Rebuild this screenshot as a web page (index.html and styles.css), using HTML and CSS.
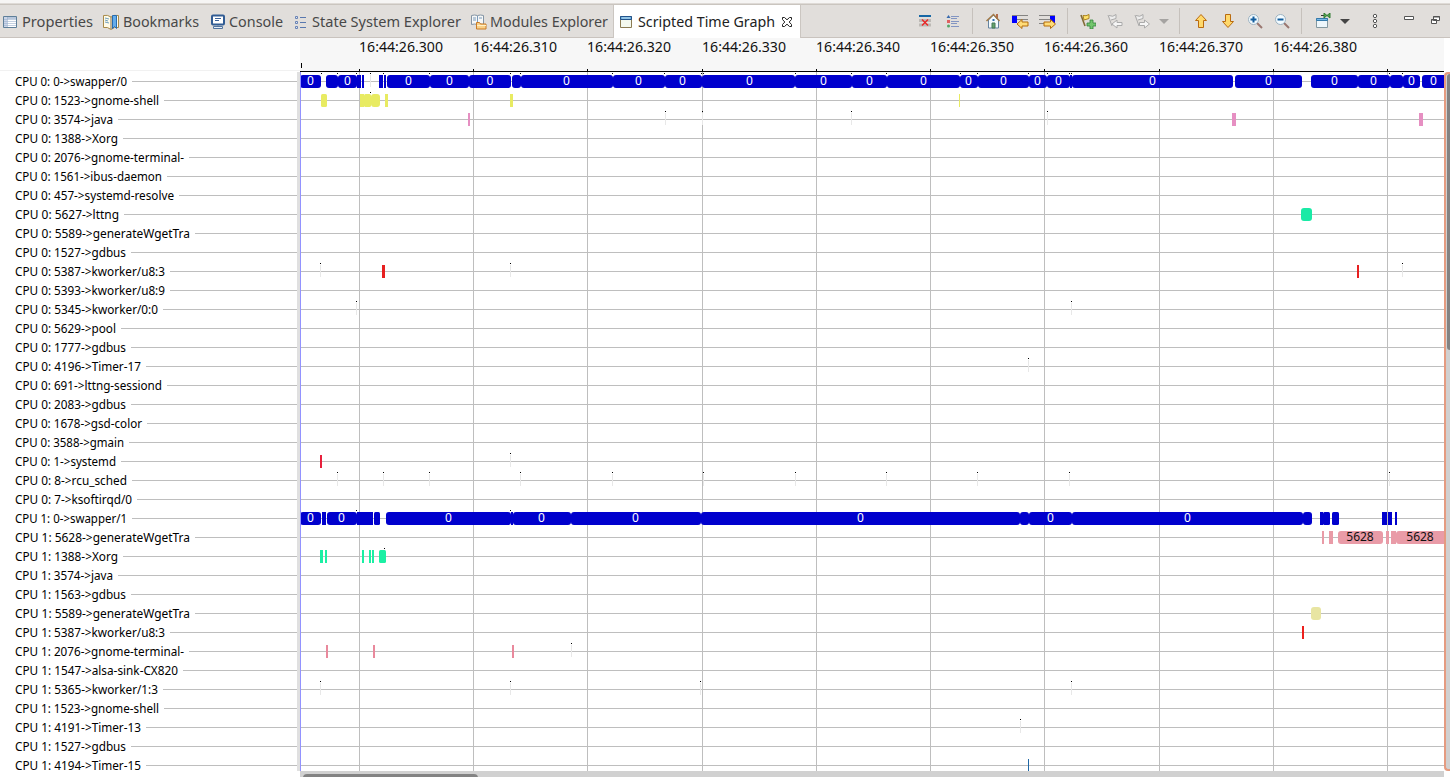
FILE: index.html
```html
<!DOCTYPE html>
<html lang="en">
<head>
<meta charset="utf-8">
<title>Scripted Time Graph</title>
<link rel="stylesheet" href="styles.css">
</head>
<body>
<header class="tabbar">
  <nav class="tabs">
    <div class="tab tab-properties"><svg class="icon" viewBox="0 0 16 16"><path d="M1.500 2.500h13v11h-13z" fill="#fff" stroke="#5f7f99"/><path d="M2 3h12v2H2z" fill="#b8c7dc"/><path d="M2 3h3v10H2z" fill="#cbd5e8"/><path d="M5.500 3v10M2 5.500h12M2 7.500h12M2 9.500h12M2 11.500h12" stroke="#9bb0cc" stroke-width=".6" fill="none"/></svg><span data-width="71">Properties</span></div>
    <div class="tab tab-bookmarks"><svg class="icon" viewBox="0 0 16 16"><path d="M.5 1.500q4-1 7.500 1.500q3.500-2.500 7.500-1.500v12q-4-1-7.500 2q-3.500-3-7.500-2z" fill="#fffbe8" stroke="#a88a48"/><path d="M8 3v12" stroke="#836e45"/><path d="M2 4l4 1M2 6l3 1M2 8l4 1" stroke="#70a0bf" fill="none"/><path d="M9.500 1.500h4v13l-2-2-2 2z" fill="#64acea" stroke="#286cae"/></svg><span data-width="76">Bookmarks</span></div>
    <div class="tab tab-console"><svg class="icon" viewBox="0 0 16 16"><rect x="2" y="1.500" width="12" height="9" rx="1" fill="#fff" stroke="#315c94" stroke-width="2"/><path d="M5 4.500h6M5 6.500h4" stroke="#3c6298"/><path d="M7 11h2v2H7z" fill="#7890b0"/><path d="M3.500 12.500h9v2h-9z" fill="#e4eef8" stroke="#52749e"/></svg><span data-width="54">Console</span></div>
    <div class="tab tab-states"><svg class="icon" viewBox="0 0 16 16"><path d="M2.500 2.500h2v2h-2zM2.500 7.500h2v2h-2zM2.500 12.500h2v2h-2z" fill="#e2e8f4" stroke="#6883b5"/><path d="M7 3.500h6M7 8.500h6M7 13.500h6" stroke="#5978af"/></svg><span data-width="149">State System Explorer</span></div>
    <div class="tab tab-modules"><svg class="icon" viewBox="0 0 16 16"><path d="M.5 1.500q3-1 6 0q3-1 6 0v9q-3-1-6 0q-3-1-6 0z" fill="#f6f7f7" stroke="#8394a4"/><path d="M6.500 2v8M2 4h3M2 6h3M8 4h3" stroke="#7b9aba"/><path d="M5.500 8.500h3l1 1.500h5.500v5h-9.500z" fill="#f9d189" stroke="#c97a26"/><path d="M6 11.500h9" stroke="#fff1c9"/></svg><span data-width="118">Modules Explorer</span></div>
    <div class="tab active"><svg class="icon" viewBox="0 0 16 16"><path d="M2.500 2.500h11v11h-11z" fill="#f4f9ef" stroke="#8b7c54"/><path d="M2.500 2.500h11v3h-11z" fill="#6faeda" stroke="#22538c"/><path d="M4 4h8" stroke="#b6daf1"/></svg><span data-width="137">Scripted Time Graph</span><svg class="close" viewBox="0 0 12 12"><path d="M1.500 1.500h2l2.500 2.300 2.500-2.300h2v2l-2.300 2.500 2.300 2.500v2h-2L6 8.200 3.500 10.500h-2v-2L3.800 6 1.500 3.500z" fill="#fff" stroke="#222"/></svg></div>
  </nav>
  <div class="tools">
    <div class="tool wide"><svg class="icon" viewBox="0 0 16 16"><path d="M2 3h12" stroke="#1767a5" stroke-width="2"/><path d="M2 7.500h12M2 12h12" stroke="#bcb9b5" stroke-width="3"/><path d="M5 6.500l6 6M11 6.500l-6 6" stroke="#eb2525" stroke-width="1.400"/></svg></div>
    <div class="tool wide"><svg class="icon" viewBox="0 0 16 16"><path d="M3.500 2l2 3h-4z" fill="#386aae"/><path d="M2 7h3v3H2z" fill="#df6060"/><circle cx="3.500" cy="13" r="1.500" fill="#51a667"/><path d="M6 3.500h8M6 5.500h6M6 8.500h8M6 10.500h6M6 13.500h8" stroke="#8395c2"/></svg></div>
    <i class="sep s1"></i>
    <div class="tool"><svg class="icon" viewBox="0 0 16 16"><path d="M3.500 7v8h10V7l-5-5z" fill="#f4fafc" stroke="#6584a0"/><path d="M11 1h2v5h-2z" fill="#b46b4b"/><path d="M1.500 8l7-6.500 6 6.500" fill="none" stroke="#a17947" stroke-width="1.500"/><path d="M7 10h3v5H7z" fill="#65a36c" stroke="#457957"/><path d="M7.500 6h2v2h-2z" fill="#2e6fb1"/></svg></div>
    <div class="tool"><svg class="icon wide-icon" viewBox="0 0 18 16"><path d="M0 2h5v8H0z" fill="#00f"/><path d="M0 2.500h16M5 6.500h11M5 10.500h9" stroke="#858482"/><path d="M5 11l5-4.500v2.500h6v4h-6v2.500z" fill="#ffdc78" stroke="#b46c0b"/></svg></div>
    <div class="tool"><svg class="icon wide-icon" viewBox="0 0 18 16"><path d="M11 2h5v8h-5z" fill="#00f"/><path d="M0 2.500h16M0 6.500h11M0 10.500h8" stroke="#858482"/><path d="M16.500 11l-5-4.500v2.500H5v4h6.500v2.500z" fill="#ffdc78" stroke="#b46c0b"/></svg></div>
    <i class="sep s2"></i>
    <div class="tool"><svg class="icon" viewBox="0 0 16 16"><path d="M1 2l4 11" stroke="#826b36" stroke-width="1.600"/><path d="M3 2.500q3 1 6-1v4l-5 1.500z" fill="#ffe36c" stroke="#ac831d"/><path d="M10 7h3v3h3v3h-3v3h-3v-3H7v-3h3z" fill="#72c56c" stroke="#34833e" stroke-width=".8"/></svg></div>
    <div class="tool"><svg class="icon" viewBox="0 0 16 16"><path d="M1 2l4 11M2 2.500q4 2 7-1v4l-5 1.500" fill="#eee" stroke="#aaa"/><path d="M5 11l5-4v2.500h5v3h-5V15z" fill="#f5f5f5" stroke="#aaa"/></svg></div>
    <div class="tool"><svg class="icon" viewBox="0 0 16 16"><path d="M1 2l4 11M2 2.500q4 2 7-1v4l-5 1.500" fill="#eee" stroke="#aaa"/><path d="M15.500 11l-5-4v2.500h-5v3h5V15z" fill="#f5f5f5" stroke="#aaa"/></svg></div>
    <div class="drop"><i class="triangle disabled"></i></div>
    <i class="sep s3"></i>
    <div class="tool"><svg class="icon" viewBox="0 0 16 16"><path d="M8 1.500l5.500 6h-3v7h-5v-7h-3z" fill="#ffd96b" stroke="#b96b10"/></svg></div>
    <div class="tool"><svg class="icon" viewBox="0 0 16 16"><path d="M8 14.500l5.500-6h-3v-7h-5v7h-3z" fill="#ffd96b" stroke="#b96b10"/></svg></div>
    <div class="tool"><svg class="icon" viewBox="0 0 16 16"><path d="M10 10l5 5" stroke="#9a7770" stroke-width="2"/><circle cx="6.500" cy="6.500" r="5" fill="#f3fbff" stroke="#9db3c2"/><path d="M3.500 6.500h6M6.500 3.500v6" stroke="#135d9d" stroke-width="2"/></svg></div>
    <div class="tool"><svg class="icon" viewBox="0 0 16 16"><path d="M10 10l5 5" stroke="#9a7770" stroke-width="2"/><circle cx="6.500" cy="6.500" r="5" fill="#f3fbff" stroke="#9db3c2"/><path d="M3.500 6.500h6" stroke="#135d9d" stroke-width="2"/></svg></div>
    <i class="sep s4"></i>
    <div class="tool"><svg class="icon" viewBox="0 0 16 16"><path d="M1.500 5.500h11v9h-11z" fill="#edf6fb" stroke="#8498a0"/><path d="M1.500 5.500h11v2h-11z" fill="#79b8e7" stroke="#347aac"/><path d="M6 2.500h4" stroke="#333"/><path d="M9 0l3 2.500L9 5zM15 0l-3 2.500L15 5z" fill="#57a84d" stroke="#327c35"/></svg></div>
    <div class="drop"><i class="triangle"></i></div>
    <div class="menu"><svg class="dots" viewBox="0 0 6 16"><g fill="#fff" stroke="#555"><circle cx="3" cy="3" r="1.700"/><circle cx="3" cy="8" r="1.700"/><circle cx="3" cy="13" r="1.700"/></g></svg></div>
    <div class="window"><svg class="icon" viewBox="0 0 16 16"><path d="M3.500 3.500h9v3h-9z" fill="#fff" stroke="#555"/></svg></div>
    <div class="window"><svg class="icon" viewBox="0 0 16 16"><path d="M6.500 3.500h6v4h-6zM4.500 6.500h5v4h-5z" fill="#fff" stroke="#555"/><path d="M6 4h7M4 7h6" stroke="#555"/></svg></div>
  </div>
</header>
<main class="view">
  <section class="names"><div class="names-head"></div><div id="labels"></div></section>
  <section class="graph">
    <div class="scale" id="scale"></div>
    <svg id="chart" width="1144" height="699" viewBox="300 72 1144 699"></svg>
    <div class="hscroll"><div class="hthumb"></div></div>
  </section>
  <aside class="vscroll"><div class="vthumb"></div></aside>
</main>
<script src="graph.js"></script>
</body>
</html>
```
FILE: styles.css
```css
* { box-sizing: border-box; }
body { margin: 0; width: 1450px; height: 777px; overflow: hidden; background: #fff; font-family: "Noto Sans", "Open Sans", sans-serif; color: #1a1a1a; }
.tabbar { height: 38px; padding-top: 5px; display: flex; background: linear-gradient(#f6f5f4 0 3px, #dedad6 3px 4px, #cac5bf 4px 5px, #e1dedb 5px 37px, #c9c3be 37px); }
.tabs { display: flex; width: 801px; }
.tab { display: flex; align-items: center; height: 33px; padding-left: 2px; gap: 4px; font-size: 14px; color: #484848; white-space: nowrap; }
.tab-properties { width: 101px; }
.tab-bookmarks { width: 107px; }
.tab-console { width: 83px; gap: 3px; }
.tab-states { width: 178px; gap: 3px; }
.tab-modules { width: 144px; gap: 3px; }
.active { width: 188px; padding-left: 4px; background: #fff; border: solid #cbc6c1; border-width: 0 1px; color: #222; }
.icon { display: block; width: 16px; height: 16px; flex: none; }
.close { width: 12px; height: 12px; margin-left: 2px; }
.fitted { display: block; transform-origin: left center; white-space: nowrap; }
.tools { display: flex; height: 32px; padding-left: 110px; align-items: center; }
.tool { width: 27px; padding-left: 6px; }
.wide { width: 28px; }
.wide-icon { width: 18px; }
.sep { width: 1px; height: 26px; background: #c6c1bc; margin: 0 7px; }
.s1 { margin: 0 6px 0 5px; }
.s2 { margin-right: 6px; }
.s4 { margin-left: 6px; }
.drop { width: 17px; display: flex; justify-content: center; }
.triangle { border: 5px solid transparent; border-top-color: #444; border-bottom: 0; }
.disabled { border-top-color: #a5a3a1; }
.menu { width: 43px; display: flex; justify-content: center; }
.dots { width: 6px; height: 16px; }
.window { width: 26px; display: flex; justify-content: center; }
.view { display: flex; height: 739px; }
.names { width: 300px; }
.names-head { height: 34px; background: linear-gradient(#fff 32px, #f1f1f1 32px 33px, #fff 33px); }
#labels { height: 699px; border-right: 3px solid #e0e0e0; }
.row { height: 19px; padding-left: 15px; display: flex; align-items: center; gap: 5px; font-size: 12px; line-height: 19px; color: #000; }
.row::after { content: ""; flex: 1; height: 1px; background: #bebebe; }
.graph { width: 1144px; }
.scale { height: 34px; padding-left: 59px; display: flex; background: linear-gradient(#f7f7f7 33px, #000 33px); position: relative; }
.scale::before { content: ""; position: absolute; left: 1px; top: 25px; width: 1px; height: 5px; background: #000; }
.mark { flex: none; font-size: 13.5px; line-height: 18px; color: #111; background: linear-gradient(#000, #000) 0 100% / 1px 3px no-repeat; }
#chart { display: block; }
.bar-label { font-size: 12px; text-anchor: middle; }
.hscroll { height: 6px; padding: 3px 0 0 3px; background: #d1d1d1; }
.hthumb { width: 175px; height: 8px; border-radius: 4px; background: #838383; }
.vscroll { width: 6px; height: 699px; margin-top: 34px; background: #d0d0d0; border: solid #e59b80; border-width: 2px 0 2px 2px; border-radius: 4px 0 0 4px; padding-left: 1px; overflow: hidden; }
.vthumb { height: 276px; background: #828282; border-radius: 4px 0 0 4px; }
```
FILE: graph.js
```js
const names = [
  ['0: 0->swapper/0', 127], ['0: 1523->gnome-shell', 159], ['0: 3574->java', 113], ['0: 1388->Xorg', 118],
  ['0: 2076->gnome-terminal-', 184], ['0: 1561->ibus-daemon', 162], ['0: 457->systemd-resolve', 174], ['0: 5627->lttng', 119],
  ['0: 5589->generateWgetTra', 190], ['0: 1527->gdbus', 126], ['0: 5387->kworker/u8:3', 165], ['0: 5393->kworker/u8:9', 165],
  ['0: 5345->kworker/0:0', 158], ['0: 5629->pool', 116], ['0: 1777->gdbus', 126], ['0: 4196->Timer-17', 141],
  ['0: 691->lttng-sessiond', 162], ['0: 2083->gdbus', 126], ['0: 1678->gsd-color', 142], ['0: 3588->gmain', 124],
  ['0: 1->systemd', 116], ['0: 8->rcu_sched', 127], ['0: 7->ksoftirqd/0', 132], ['1: 0->swapper/1', 127],
  ['1: 5628->generateWgetTra', 190], ['1: 1388->Xorg', 118], ['1: 3574->java', 113], ['1: 1563->gdbus', 126],
  ['1: 5589->generateWgetTra', 190], ['1: 5387->kworker/u8:3', 165], ['1: 2076->gnome-terminal-', 184], ['1: 1547->alsa-sink-CX820', 178],
  ['1: 5365->kworker/1:3', 158], ['1: 1523->gnome-shell', 159], ['1: 4191->Timer-13', 141], ['1: 1527->gdbus', 126], ['1: 4194->Timer-15', 141]
];
// Each state: row, colour, [start, end, label, label centre]
const states = [
  [0, '#0000cd', [[300,321,'0',310.5],[326,338],[338,357,'0',347.5],[357,361],[362,364],[379,383],[384,386],[387,430,'0',408.5],[430,469,'0',449.5],[469,511,'0',490],[512,521],[521,613,'0',566.5],[613,665,'0',638.5],[665,702,'0',682.5],[702,795,'0',749.5],[795,852,'0',823.5],[852,887,'0',869.5],[887,960,'0',923.5],[960,978,'0',968.5],[978,1029,'0',1003.5],[1029,1047,'0',1037.5],[1047,1070,'0',1058.5],[1070,1072],[1072,1233,'0',1152.5],[1235,1302,'0',1268.5],[1311,1358,'0',1334.5],[1358,1390,'0',1373.5],[1390,1403],[1403,1420,'0',1411.5],[1422,1446,'0',1433.5]]],
  [1, '#e8eb62', [[321,327],[360,364],[364,371],[371,380],[385,388],[510,513],[959,960]]],
  [2, '#e68fc2', [[468,470],[1232,1236],[1419,1423]]],
  [7, '#1aeaa6', [[1301,1312]]],
  [10, '#e72020', [[382,385],[1357,1359]]],
  [20, '#e8203c', [[320,322]]],
  [23, '#0000cd', [[300,321,'0',310.5],[322,326],[327,357,'0',341.5],[357,362],[362,367],[367,371],[371,373],[374,380],[386,511,'0',448.5],[511,513],[513,571,'0',541.5],[571,701,'0',635.5],[701,1020,'0',860.5],[1020,1029],[1029,1072,'0',1050.5],[1072,1303,'0',1187.5],[1303,1312],[1320,1323],[1323,1330],[1332,1339],[1382,1387],[1388,1392],[1395,1397]]],
  [24, '#e99ba7', [[1322,1324],[1329,1333],[1338,1383,'5628',1360],[1386,1389],[1391,1396],[1396,1446,'5628',1420]]],
  [25, '#1bf0a4', [[320,323],[325,327],[362,364],[369,371],[372,374],[379,386]]],
  [28, '#e8e5a2', [[1311,1321]]],
  [29, '#ed201d', [[1302,1304]]],
  [30, '#e9899c', [[326,328],[373,375],[512,514]]],
  [36, '#2068a6', [[1028,1029]]]
];
const dots = {0:[321,337,356,370,383,429,510,520,612,664,701,703,795,851,886,960,977,1028,1047,1069,1071,1389,1402],23:[356,510],25:[384],1:[370]};
const ticks = {0:[370],2:[665,702,851,1047],10:[320,510,1402],12:[356,1071],15:[1028],20:[510],21:[337,383,429,520,612,703,795,886,977,1069,1389],30:[571],32:[320,510,700,1071],34:[1020]};
const gridLines = [359,473,587,702,816,930,1044,1159,1273,1387];

function fit(span, width) {
  const text = document.createElement('span');
  text.className = 'fitted';
  text.textContent = span.textContent;
  span.replaceChildren(text);
  span.style.display = 'block';
  span.style.flex = 'none';
  text.style.width = 'max-content';
  text.style.transform = `scaleX(${width / text.getBoundingClientRect().width})`;
  span.style.width = width + 'px';
}

names.forEach(([name, end]) => {
  const row = document.createElement('div');
  row.className = 'row';
  const label = document.createElement('span');
  label.textContent = 'CPU ' + name;
  row.append(label);
  document.getElementById('labels').append(row);
  fit(label, end - 15);
});
document.querySelectorAll('[data-width]').forEach(el => fit(el, Number(el.dataset.width)));

gridLines.forEach((x, i) => {
  const mark = document.createElement('div');
  mark.className = 'mark';
  mark.style.width = ((gridLines[i + 1] || 1444) - x) + 'px';
  document.getElementById('scale').append(mark);
  if (x >= 1387) return;
  const time = document.createElement('span');
  time.textContent = '16:44:26.' + (300 + i * 10);
  mark.append(time);
  fit(time, 84);
});

const rect = (x, y, w, h, fill, r = 0) => `<rect x="${x}" y="${y}" width="${w}" height="${h}" rx="${r}" fill="${fill}"/>`;
let drawing = '';
gridLines.forEach(x => drawing += rect(x, 72, 1, 699, '#bebebe'));
names.forEach((_, i) => drawing += rect(300, 81 + i * 19, 1144, 1, '#bebebe'));
for (const [row, list] of Object.entries(ticks)) {
  list.forEach(x => {
    drawing += rect(x, 75 + row * 19, 1, 12, '#e8e8e8');
    drawing += rect(x, 73 + row * 19, 1, 1, '#000');
  });
}
states.forEach(([row, color, spans]) => spans.forEach(([start, end, label, centre]) => {
  const y = 75 + row * 19;
  const width = end - start;
  drawing += rect(start, y, width, 13, color, width >= 9 ? 3 : width > 5 ? 1.5 : 0);
  if (label) drawing += `<text class="bar-label" x="${centre}" y="${y + 10}" fill="${label === '0' ? '#fff' : '#111'}">${label}</text>`;
}));
for (const [row, list] of Object.entries(dots)) list.forEach(x => drawing += rect(x, 73 + row * 19, 1, 1, '#000'));
drawing += rect(300, 72, 1, 699, '#9292ff');
document.getElementById('chart').innerHTML = drawing;
```
